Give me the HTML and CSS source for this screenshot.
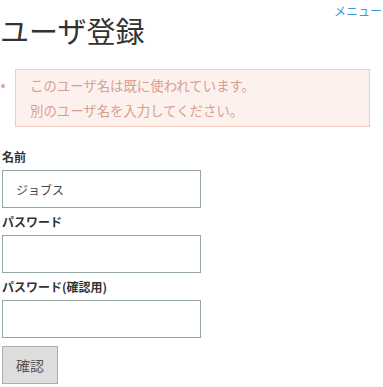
FILE: index.html
```html
<!DOCTYPE html>
<html lang="ja">
<head>
<meta charset="utf-8">
<title>ユーザ登録</title>
<link rel="stylesheet" href="styles.css">
</head>
<body>
<nav class="topnav"><a href="#" class="menu-link">メニュー</a></nav>
<h1 class="title">ユーザ登録</h1>
<ul class="errors">
  <li class="error-item">
    <div class="error-box">このユーザ名は既に使われています。<br>別のユーザ名を入力してください。</div>
  </li>
</ul>
<form class="form">
  <label class="field-label" for="name">名前</label>
  <input class="field-input" id="name" type="text" value="ジョブス">
  <label class="field-label" for="pw">パスワード</label>
  <input class="field-input" id="pw" type="password">
  <label class="field-label" for="pw2">パスワード(確認用)</label>
  <input class="field-input" id="pw2" type="password">
  <button class="submit-btn" type="button">確認</button>
</form>
</body>
</html>
```
FILE: styles.css
```css
html, body {
  margin: 0;
  padding: 0;
  background: #ffffff;
}
body {
  padding: 0 0 0 2px;
  font-family: "Noto Sans CJK JP", "Noto Sans", sans-serif;
  color: #333333;
}
.topnav {
  display: flex;
  justify-content: flex-end;
  height: 18px;
  padding-top: 3px;
  box-sizing: border-box;
  font-size: 12px;
  line-height: 16px;
}
.menu-link {
  color: #3c95de;
  text-decoration: none;
  margin-right: 1px;
}
.title {
  margin: 0;
  font-size: 29px;
  font-weight: normal;
  line-height: 25px;
  color: #333333;
  margin-left: -2px;
}
.errors {
  list-style: none;
  margin: 26px 13px 16px -2px;
  padding: 0;
}
.error-item {
  display: flex;
  align-items: flex-start;
}
.error-item::before {
  content: "";
  flex: none;
  width: 4px;
  height: 4px;
  border-radius: 50%;
  background: #d9a898;
  margin: 15px 10px 0 1px;
}
.error-box {
  flex: 1;
  border: 1px solid #f3cbbf;
  background: #fdf1ee;
  color: #d6a08e;
  font-size: 13.4px;
  line-height: 25px;
  padding: 3px 14px;
}
.form {
  display: flex;
  flex-direction: column;
  align-items: flex-start;
}
.field-label {
  display: block;
  font-size: 12px;
  font-weight: bold;
  line-height: 27px;
  height: 27px;
  color: #333333;
}
.field-input {
  display: block;
  box-sizing: border-box;
  width: 199px;
  height: 38px;
  margin: 0;
  border: 1px solid #94a6a3;
  border-radius: 0;
  padding: 0 13px;
  font-family: "Noto Sans CJK JP", "Noto Sans", sans-serif;
  font-size: 12px;
  color: #444444;
  background: #ffffff;
  outline: none;
}
.submit-btn {
  box-sizing: border-box;
  width: 56px;
  height: 38px;
  margin-top: 8px;
  padding: 0;
  border: 1px solid #a9aeae;
  border-radius: 0;
  background: #dddddd;
  font-family: "Noto Sans CJK JP", "Noto Sans", sans-serif;
  font-size: 14px;
  color: #555555;
}
```
